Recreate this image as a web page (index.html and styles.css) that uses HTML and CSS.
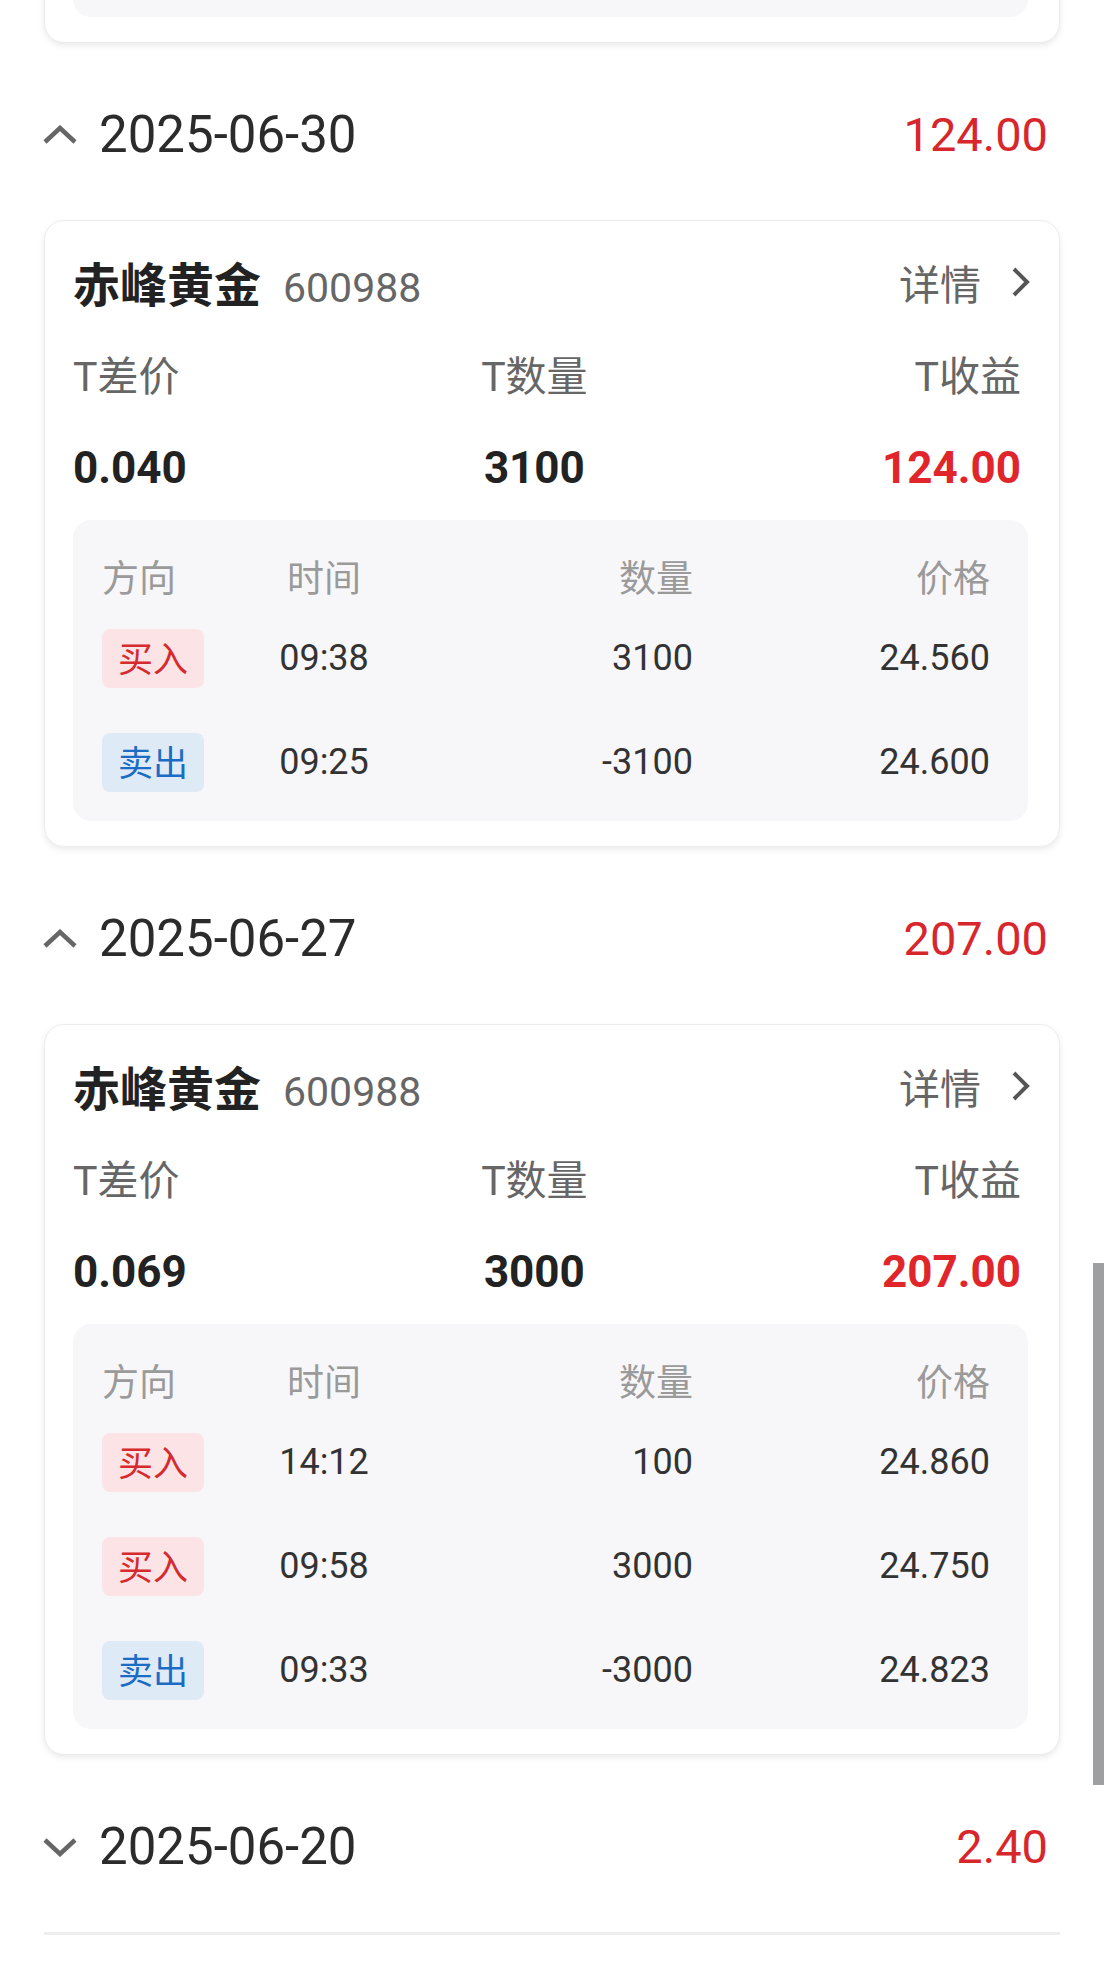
FILE: index.html
```html
<!DOCTYPE html>
<html lang="zh-CN">

<head>
    <meta charset="UTF-8">
    <meta name="viewport" content="width=device-width, initial-scale=1.0">
    <title>做T记录</title>
    <link rel="stylesheet" href="styles.css">
</head>

<body>

    <div class="page">
        <!-- tail of the previous day's card, scrolled mostly out of view -->
        <div class="card card-tail">
            <div class="trades trades-tail"></div>
        </div>

        <section class="day">
            <div class="day-head">
                <svg class="fold" viewBox="0 0 34 20"><polyline points="2,17 17,3 32,17" /></svg>
                <span class="day-date">2025-06-30</span>
                <span class="day-total">124.00</span>
            </div>
            <div class="card">
                <div class="card-title">
                    <span class="stock-name">赤峰黄金</span>
                    <span class="stock-code">600988</span>
                    <a class="detail">详情<svg viewBox="0 0 20 30"><polyline points="3,2 16,15 3,28" /></svg></a>
                </div>
                <div class="stats">
                    <div class="stat">
                        <div class="stat-label">T差价</div>
                        <div class="stat-value">0.040</div>
                    </div>
                    <div class="stat stat-mid">
                        <div class="stat-label">T数量</div>
                        <div class="stat-value">3100</div>
                    </div>
                    <div class="stat stat-end">
                        <div class="stat-label">T收益</div>
                        <div class="stat-value up">124.00</div>
                    </div>
                </div>
                <div class="trades">
                    <div class="trade trade-head">
                        <span>方向</span><span class="c-time">时间</span><span class="c-num">数量</span><span class="c-num">价格</span>
                    </div>
                    <div class="trade">
                        <span><em class="tag buy">买入</em></span><span class="c-time">09:38</span><span class="c-num">3100</span><span class="c-num">24.560</span>
                    </div>
                    <div class="trade">
                        <span><em class="tag sell">卖出</em></span><span class="c-time">09:25</span><span class="c-num">-3100</span><span class="c-num">24.600</span>
                    </div>
                </div>
            </div>
        </section>

        <section class="day">
            <div class="day-head">
                <svg class="fold" viewBox="0 0 34 20"><polyline points="2,17 17,3 32,17" /></svg>
                <span class="day-date">2025-06-27</span>
                <span class="day-total">207.00</span>
            </div>
            <div class="card">
                <div class="card-title">
                    <span class="stock-name">赤峰黄金</span>
                    <span class="stock-code">600988</span>
                    <a class="detail">详情<svg viewBox="0 0 20 30"><polyline points="3,2 16,15 3,28" /></svg></a>
                </div>
                <div class="stats">
                    <div class="stat">
                        <div class="stat-label">T差价</div>
                        <div class="stat-value">0.069</div>
                    </div>
                    <div class="stat stat-mid">
                        <div class="stat-label">T数量</div>
                        <div class="stat-value">3000</div>
                    </div>
                    <div class="stat stat-end">
                        <div class="stat-label">T收益</div>
                        <div class="stat-value up">207.00</div>
                    </div>
                </div>
                <div class="trades">
                    <div class="trade trade-head">
                        <span>方向</span><span class="c-time">时间</span><span class="c-num">数量</span><span class="c-num">价格</span>
                    </div>
                    <div class="trade">
                        <span><em class="tag buy">买入</em></span><span class="c-time">14:12</span><span class="c-num">100</span><span class="c-num">24.860</span>
                    </div>
                    <div class="trade">
                        <span><em class="tag buy">买入</em></span><span class="c-time">09:58</span><span class="c-num">3000</span><span class="c-num">24.750</span>
                    </div>
                    <div class="trade">
                        <span><em class="tag sell">卖出</em></span><span class="c-time">09:33</span><span class="c-num">-3000</span><span class="c-num">24.823</span>
                    </div>
                </div>
            </div>
        </section>

        <section class="day collapsed">
            <div class="day-head">
                <svg class="fold" viewBox="0 0 34 20"><polyline points="2,3 17,17 32,3" /></svg>
                <span class="day-date">2025-06-20</span>
                <span class="day-total">2.40</span>
            </div>
        </section>
    </div>

    <div class="scrollbar"></div>

</body>

</html>
```

FILE: styles.css
```css
body {
    margin: 0;
    padding: 0;
    background-color: #fff;
    color: #2b2b2b;
    font-family: Roboto, "Noto Sans CJK SC", sans-serif;
    overflow: hidden;
}

.page {
    padding: 0 44px;
}

.card {
    background-color: #fff;
    border: 1px solid #ececec;
    border-radius: 20px;
    box-shadow: 0 3px 6px rgba(0, 0, 0, 0.08);
    padding: 28px 28px 25px 28px;
}

.card-tail {
    margin-top: -98px;
}

.trades-tail {
    height: 53px;
}

/* day header */

.day-head {
    height: 171px;
    padding-top: 6px;
    display: flex;
    align-items: center;
    padding-right: 12px;
}

.collapsed .day-head {
    border-bottom: 3px solid #eeeeee;
}

.fold {
    width: 34px;
    height: 20px;
    margin-left: -1px;
    margin-right: 22px;
    fill: none;
    stroke: #666;
    stroke-width: 4.5;
}

.day-date {
    font-size: 51px;
    color: #2b2b2b;
}

.day-total {
    margin-left: auto;
    font-size: 47px;
    color: #d8262d;
}

/* card title */

.card-title {
    height: 66px;
    display: flex;
    align-items: baseline;
    line-height: 66px;
}

.stock-name {
    font-family: "Noto Sans CJK SC", sans-serif;
    font-weight: bold;
    font-size: 47px;
    color: #222;
}

.stock-code {
    margin-left: 22px;
    font-size: 41px;
    color: #666;
}

.detail {
    margin-left: auto;
    display: flex;
    align-items: center;
    align-self: center;
    font-family: "Noto Sans CJK SC", sans-serif;
    font-size: 41px;
    color: #666;
}

.detail svg {
    width: 20px;
    height: 30px;
    margin-left: 30px;
    fill: none;
    stroke: #555;
    stroke-width: 4;
}

/* stats */

.stats {
    display: flex;
    justify-content: space-between;
    padding: 33px 10px 23px 0;
}

.stat-label {
    font-size: 41px;
    line-height: 58px;
    color: #666;
}

.stat-value {
    margin-top: 33px;
    font-size: 44px;
    line-height: 58px;
    font-weight: bold;
    color: #222;
}

.stat-value.up {
    color: #e0262b;
}

.stat-mid {
    text-align: center;
}

.stat-end {
    text-align: right;
}

/* trades table */

.trades {
    background-color: #f7f7f9;
    border-radius: 18px;
    padding: 26px 38px 7px 29px;
    margin-right: 3px;
}

.trade {
    display: grid;
    grid-template-columns: 150px 144px 1fr 1fr;
    align-items: center;
    height: 104px;
    font-size: 36px;
    color: #333;
}

.trade-head {
    height: 60px;
    font-size: 37px;
    color: #9a9a9a;
}

.c-time {
    text-align: center;
}

.c-num {
    text-align: right;
}

.tag {
    display: inline-block;
    font-style: normal;
    font-family: "Noto Sans CJK SC", sans-serif;
    font-size: 35px;
    line-height: 56px;
    padding: 0 16px 3px;
    border-radius: 8px;
    vertical-align: middle;
}

.tag.buy {
    color: #d52b2f;
    background-color: #fce4e6;
}

.tag.sell {
    color: #1a6cc4;
    background-color: #dfeaf7;
}

.scrollbar {
    position: fixed;
    right: 0;
    top: 1263px;
    width: 11px;
    height: 522px;
    background-color: #9d9fa1;
}
```
